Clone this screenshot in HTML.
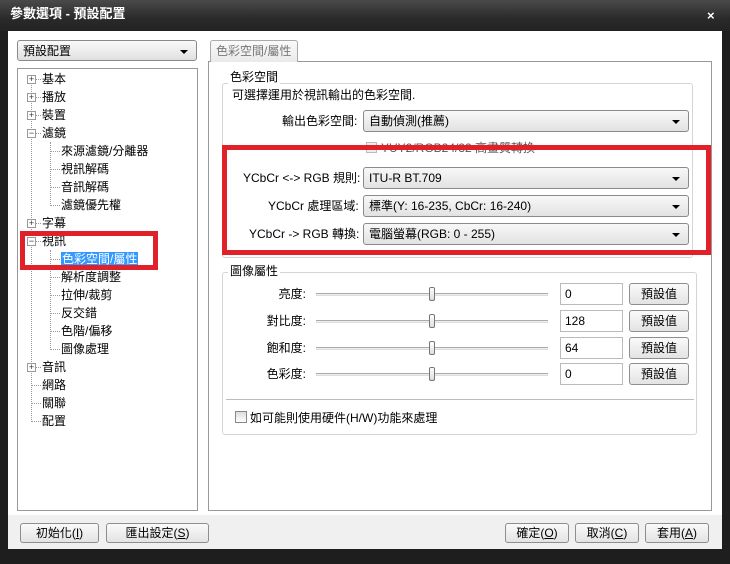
<!DOCTYPE html>
<html><head><meta charset="utf-8"><style>
*{box-sizing:border-box;margin:0;padding:0}
body{width:730px;height:564px;overflow:hidden;background:#1e1e1e;font-family:"Liberation Sans","Noto Sans CJK TC",sans-serif;font-size:12px;color:#000;position:relative}
.a{position:absolute}
.title{left:0;top:0;width:730px;height:31px;background:linear-gradient(#4a4a4a,#2a2a2a 60%,#222)}
.body{left:8px;top:31px;width:714px;height:518px;background:#fff}
.foot{left:8px;top:515px;width:714px;height:34px;background:#f0f0f0}
.combo{border:1px solid #8a8a8a;border-radius:3px;background:linear-gradient(#f8f8f8,#e2e2e2);height:22px;padding:2px 5px;font-size:12px;line-height:16px}
.combo:after{content:"";position:absolute;right:8px;top:9px;border-left:4px solid transparent;border-right:4px solid transparent;border-top:4px solid #000}
.btn{border:1px solid #8e8e8e;border-radius:3px;background:linear-gradient(#fafafa,#e3e3e3);text-align:center;font-size:12px;line-height:18px}
.t{position:absolute;white-space:nowrap;line-height:14px}
.exp{position:absolute;width:9px;height:9px;border:1px solid #999;background:#fff;font-size:9px;line-height:7px;text-align:center;color:#333}
.grp{border:1px solid #d5d5d5;border-radius:3px}
.red{border:5px solid #e0212a}
.edit{border:1px solid #bbb;background:#fff;padding:2px 4px;height:22px;line-height:16px}
.track{height:3px;border-top:1px solid #aaa;border-bottom:1px solid #ddd;background:#eee}
.thumb{width:6px;height:14px;border:1px solid #777;border-radius:2px;background:linear-gradient(#fff,#ddd)}
.dot{position:absolute;border-left:1px dotted #999}
.doth{position:absolute;border-top:1px dotted #999}
</style></head><body>
<div class="a title"></div>
<div class="t" style="left:10px;top:7px;color:#fff;font-weight:bold;font-size:13px">參數選項 - 預設配置</div>
<div class="t" style="left:707px;top:9px;color:#fff;font-weight:bold;font-size:13px">×</div>
<div class="a body"></div>
<div class="a foot"></div>

<div class="a combo" style="left:17px;top:40px;width:180px;height:21px;background:linear-gradient(#fafafa,#e0e0e0)">預設配置</div>
<div class="a" style="left:17px;top:68px;width:181px;height:443px;border:1px solid #999;background:#fff"></div>
<!-- tree lines -->
<div class="dot" style="left:31px;top:78px;height:344px"></div>
<div class="dot" style="left:50px;top:142px;height:64px"></div>
<div class="dot" style="left:50px;top:250px;height:100px"></div>
<div id="tree"></div>

<!-- tab & panel -->
<div class="a" style="left:208px;top:61px;width:504px;height:450px;border:1px solid #999;background:#fff"></div>
<div class="a" style="left:210px;top:40px;width:88px;height:22px;border:1px solid #aaa;border-bottom:none;border-radius:3px 3px 0 0;background:linear-gradient(#fafafa,#eaeaea)"></div>
<div class="t" style="left:216px;top:44px;color:#777">色彩空間/屬性</div>

<div class="a grp" style="left:222px;top:83px;width:471px;height:175px"></div>
<div class="t" style="left:228px;top:70px;background:#fff;padding:0 2px">色彩空間</div>
<div class="t" style="left:232px;top:88px">可選擇運用於視訊輸出的色彩空間.</div>
<div class="t" style="left:282px;top:114px">輸出色彩空間:</div>
<div class="a combo" style="left:363px;top:110px;width:326px">自動偵測(推薦)</div>
<div class="a" style="left:366px;top:142px;width:11px;height:11px;border:1px solid #bbb;background:#eee"></div>
<div class="t" style="left:381px;top:141px;color:#555">YUY2/RGB24/32 高畫質轉換</div>
<div class="t" style="left:243px;top:171px">YCbCr &lt;-&gt; RGB 規則:</div>
<div class="a combo" style="left:363px;top:167px;width:326px">ITU-R BT.709</div>
<div class="t" style="left:268px;top:199px">YCbCr 處理區域:</div>
<div class="a combo" style="left:363px;top:195px;width:326px">標準(Y: 16-235, CbCr: 16-240)</div>
<div class="t" style="left:249px;top:227px">YCbCr -&gt; RGB 轉換:</div>
<div class="a combo" style="left:363px;top:223px;width:326px">電腦螢幕(RGB: 0 - 255)</div>
<div class="a red" style="left:222px;top:145px;width:489px;height:110px"></div>

<div class="a grp" style="left:222px;top:272px;width:475px;height:163px"></div>
<div class="t" style="left:228px;top:264px;background:#fff;padding:0 2px">圖像屬性</div>
<div id="sl"></div>
<div class="a" style="left:226px;top:399px;width:468px;height:1px;background:#bbb"></div>
<div class="a" style="left:235px;top:411px;width:12px;height:12px;border:1px solid #888;background:linear-gradient(#ddd,#fff)"></div>
<div class="t" style="left:250px;top:411px">如可能則使用硬件(H/W)功能來處理</div>

<div class="a btn" style="left:20px;top:523px;width:79px;height:20px">初始化(<u>I</u>)</div>
<div class="a btn" style="left:106px;top:523px;width:103px;height:20px">匯出設定(<u>S</u>)</div>
<div class="a btn" style="left:505px;top:523px;width:64px;height:20px">確定(<u>O</u>)</div>
<div class="a btn" style="left:575px;top:523px;width:64px;height:20px">取消(<u>C</u>)</div>
<div class="a btn" style="left:645px;top:523px;width:64px;height:20px">套用(<u>A</u>)</div>

<div class="a red" style="left:20px;top:231px;width:138px;height:39px"></div>

<script>
var items=[["基本",1,"+"],["播放",1,"+"],["裝置",1,"+"],["濾鏡",1,"-"],["來源濾鏡/分離器",2],["視訊解碼",2],["音訊解碼",2],["濾鏡優先權",2],["字幕",1,"+"],["視訊",1,"-"],["色彩空間/屬性",2,0,1],["解析度調整",2],["拉伸/裁剪",2],["反交錯",2],["色階/偏移",2],["圖像處理",2],["音訊",1,"+"],["網路",1],["關聯",1],["配置",1]];
var h="";items.forEach(function(it,i){var y=79+i*18;
if(it[1]==1){if(it[2])h+='<div class="exp" style="left:27px;top:'+(y-4)+'px">'+(it[2]=="+"?"+":"−")+'</div>';
h+='<div class="doth" style="left:'+(it[2]?36:32)+'px;top:'+y+'px;width:'+(it[2]?5:9)+'px"></div><div class="t" style="left:42px;top:'+(y-7)+'px">'+it[0]+'</div>';}
else{h+='<div class="doth" style="left:51px;top:'+y+'px;width:9px"></div><div class="t" style="left:61px;top:'+(y-7)+'px;'+(it[3]?'background:#3399ff;color:#fff;padding:0 1px;':'')+'">'+it[0]+'</div>';}});
document.getElementById("tree").innerHTML=h;
var s=[["亮度:","0",294],["對比度:","128",321],["飽和度:","64",348],["色彩度:","0",374]],g="";
s.forEach(function(r){var y=r[2];g+='<div class="t" style="right:'+(730-306)+'px;top:'+(y-7)+'px">'+r[0]+'</div><div class="a track" style="left:316px;top:'+(y-1)+'px;width:232px"></div><div class="a thumb" style="left:429px;top:'+(y-7)+'px"></div><div class="a edit" style="left:560px;top:'+(y-11)+'px;width:63px">'+r[1]+'</div><div class="a btn" style="left:629px;top:'+(y-11)+'px;width:60px;height:22px;line-height:20px">預設值</div>';});
document.getElementById("sl").innerHTML=g;
</script>
</body></html>
